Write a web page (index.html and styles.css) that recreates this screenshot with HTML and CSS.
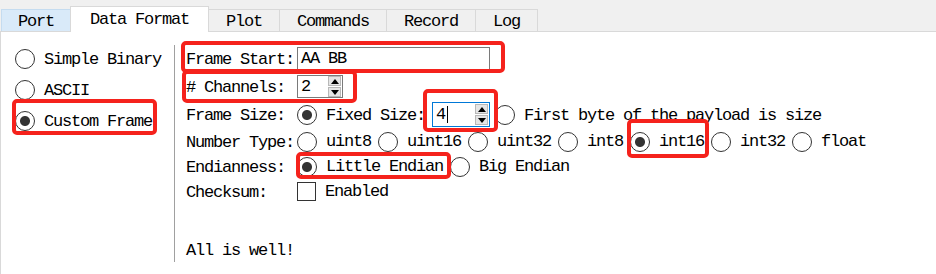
FILE: index.html
```html
<!DOCTYPE html>
<html lang="en">
<head>
  <meta charset="UTF-8" />
  <title>Data Format</title>
  <link rel="stylesheet" href="styles.css">
</head>
<body>
  <div class="tabs">
    <div class="tab hot">Port</div>
    <div class="tab active">Data Format</div>
    <div class="tab">Plot</div>
    <div class="tab">Commands</div>
    <div class="tab">Record</div>
    <div class="tab">Log</div>
  </div>

  <div class="pane">
    <div class="modes">
      <div class="opt"><span class="radio"></span>Simple Binary</div>
      <div class="opt"><span class="radio"></span>ASCII</div>
      <div class="opt"><span class="radio on"></span>Custom Frame</div>
    </div>

    <div class="divider"></div>

    <div class="form">
      <div class="grid">
        <span class="lbl">Frame Start:</span>
        <div class="field"><div class="edit">AA BB</div></div>

        <span class="lbl"># Channels:</span>
        <div class="field">
          <div class="spin">
            <span class="val">2</span>
            <div class="btns">
              <span class="btn"><svg width="8" height="5" viewBox="0 0 8 5"><path d="M0 5 L4 0 L8 5 Z" fill="#000"/></svg></span>
              <span class="btn"><svg width="8" height="5" viewBox="0 0 8 5"><path d="M0 0 L8 0 L4 5 Z" fill="#000"/></svg></span>
            </div>
          </div>
        </div>

        <span class="lbl">Frame Size:</span>
        <div class="field">
          <span class="choice"><span class="radio on"></span>Fixed Size:</span>
          <div class="spin wide">
            <span class="val">4<span class="caret"></span></span>
            <div class="btns">
              <span class="btn"><svg width="8" height="5" viewBox="0 0 8 5"><path d="M0 5 L4 0 L8 5 Z" fill="#000"/></svg></span>
              <span class="btn"><svg width="8" height="5" viewBox="0 0 8 5"><path d="M0 0 L8 0 L4 5 Z" fill="#000"/></svg></span>
            </div>
          </div>
          <span class="choice"><span class="radio"></span>First byte of the payload is size</span>
        </div>

        <span class="lbl">Number Type:</span>
        <div class="field">
          <span class="choice"><span class="radio"></span>uint8</span>
          <span class="choice"><span class="radio"></span>uint16</span>
          <span class="choice"><span class="radio"></span>uint32</span>
          <span class="choice"><span class="radio"></span>int8</span>
          <span class="choice"><span class="radio on"></span>int16</span>
          <span class="choice"><span class="radio"></span>int32</span>
          <span class="choice"><span class="radio"></span>float</span>
        </div>

        <span class="lbl">Endianness:</span>
        <div class="field">
          <span class="choice"><span class="radio on"></span>Little Endian</span>
          <span class="choice"><span class="radio"></span>Big Endian</span>
        </div>

        <span class="lbl">Checksum:</span>
        <div class="field">
          <span class="choice"><span class="check"></span>Enabled</span>
        </div>
      </div>

      <div class="status">All is well!</div>
    </div>
  </div>

  <!-- red annotation boxes -->
  <div class="mark mark-start"></div>
  <div class="mark mark-channels"></div>
  <div class="mark mark-size"></div>
  <div class="mark mark-custom"></div>
  <div class="mark mark-int16"></div>
  <div class="mark mark-little"></div>
</body>
</html>
```

FILE: styles.css
```css
body {
  margin: 0;
  width: 936px;
  height: 274px;
  overflow: hidden;
  position: relative;
  background: #fff;
  color: #000;
  font-family: "Liberation Mono", monospace;
  font-size: 17px;
  letter-spacing: -1.2px;
}

/* tab bar */
.tabs {
  display: flex;
  align-items: flex-end;
  height: 31px;
  padding-left: 2px;
  background: #f0f0f0;
  border-bottom: 1px solid #d9d9d9;
}

.tab {
  box-sizing: border-box;
  height: 22px;
  line-height: 23px;
  padding: 0 17px;
  margin-left: -1px;
  border: 1px solid #d9d9d9;
  border-bottom: none;
  white-space: nowrap;
}

.tab.hot {
  background: #d9eaf9;
  border-color: #c5dcf0;
  padding: 0 16px;
}

.tab.active {
  height: 26px;
  line-height: 25px;
  margin-bottom: -1px;
  padding: 0 19px;
  background: #fff;
}

/* page body */
.pane {
  display: flex;
  height: 242px;
  border-left: 1px solid #d9d9d9;
}

.modes {
  box-sizing: border-box;
  width: 173px;
  padding: 11px 0 0 14px;
  display: flex;
  flex-direction: column;
}

.opt {
  display: flex;
  align-items: center;
  height: 30px;
  gap: 9px;
}

.divider {
  border-left: 1px solid #a0a0a0;
  margin: 13px 0 12px;
}

.form {
  padding: 13px 0 0 11px;
}

.grid {
  display: grid;
  grid-template-columns: 111px auto;
  grid-template-rows: 27px 29px 27px 26px 24px 26px;
  align-items: center;
}

.lbl {
  white-space: pre;
  padding-top: 2px;
}

.field {
  display: flex;
  align-items: center;
  white-space: nowrap;
}

.choice {
  display: flex;
  align-items: center;
  margin-right: 7px;
  padding-top: 1px;
}

.opt,
.status {
  padding-top: 1px;
}

.radio {
  flex: none;
  box-sizing: border-box;
  width: 20px;
  height: 20px;
  border: 1px solid #333;
  border-radius: 50%;
  background: #fff;
}

.choice .radio,
.choice .check {
  margin-right: 9px;
}

.radio.on {
  background: radial-gradient(circle, #333 0 4.5px, #fff 5.5px);
}

.check {
  flex: none;
  box-sizing: border-box;
  width: 19px;
  height: 19px;
  border: 1px solid #333;
  background: #fff;
}

.edit {
  box-sizing: border-box;
  width: 193px;
  height: 23px;
  line-height: 22px;
  padding-left: 3px;
  border: 1px solid #7a7a7a;
  white-space: pre;
}

.spin {
  box-sizing: border-box;
  display: flex;
  align-items: center;
  width: 46px;
  height: 23px;
  padding-left: 3px;
  border: 1px solid #7a7a7a;
  background: #fff;
}

.spin.wide {
  width: 58px;
  height: 25px;
  margin-right: 5px;
  border-color: #0078d7;
}

.spin .val {
  flex: 1;
  display: flex;
  align-items: center;
}

.caret {
  display: inline-block;
  width: 1px;
  height: 17px;
  margin-left: 2px;
  background: #000;
}

.btns {
  display: flex;
  flex-direction: column;
  gap: 1px;
  margin-right: 1px;
}

.btn {
  box-sizing: border-box;
  width: 13px;
  height: 10px;
  display: flex;
  align-items: center;
  justify-content: center;
  background: #e5e5e5;
  border: 1px solid #b8b8b8;
}

.status {
  margin-top: 36px;
  line-height: 20px;
}

/* red highlight annotations */
.mark {
  position: absolute;
  box-sizing: border-box;
  border: 4px solid #f5221c;
  border-radius: 5px;
}

.mark-start    { left: 181px; top: 41px;  width: 324px; height: 32px; }
.mark-channels { left: 182px; top: 70px;  width: 175px; height: 33px; }
.mark-size     { left: 423px; top: 89px;  width: 75px;  height: 43px; }
.mark-custom   { left: 12px;  top: 99px;  width: 145px; height: 36px; }
.mark-int16    { left: 627px; top: 119px; width: 82px;  height: 39px; }
.mark-little   { left: 296px; top: 152px; width: 155px; height: 27px; }
```
